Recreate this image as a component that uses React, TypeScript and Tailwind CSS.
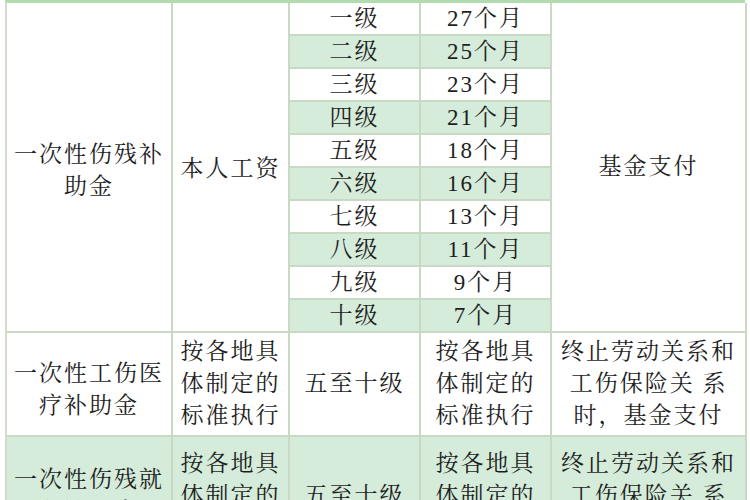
import React from "react";

const grades = [
  ["一级", "27个月"],
  ["二级", "25个月"],
  ["三级", "23个月"],
  ["四级", "21个月"],
  ["五级", "18个月"],
  ["六级", "16个月"],
  ["七级", "13个月"],
  ["八级", "11个月"],
  ["九级", "9个月"],
  ["十级", "7个月"],
];

const font = {
  fontFamily:
    '"Liberation Serif", "Noto Serif CJK SC", "Noto Sans CJK SC", serif',
};

function Cell({
  className,
  children,
}: {
  className: string;
  children: React.ReactNode;
}) {
  return (
    <div
      className={
        "flex items-center justify-center text-center border-r-2 border-b-2 border-[#c9d9c3] " +
        className
      }
    >
      {children}
    </div>
  );
}

function Lines({ lines }: { lines: string[] }) {
  return (
    <div className="flex flex-col items-center leading-[32px]">
      {lines.map((l, i) => (
        <span key={i} className="whitespace-pre">
          {l}
        </span>
      ))}
    </div>
  );
}

export default function App() {
  return (
    <div
      className="w-[750px] h-[500px] overflow-hidden bg-white text-[#1e1e1e] text-[23px] tracking-[2px]"
      style={font}
    >
      <div className="ml-[5px] w-[740px] grid grid-cols-[166px_117px_131px_131px_195px] grid-rows-[repeat(10,33px)_104px_120px] border-l-2 border-t-[3px] border-l-[#d2dccb] border-t-[#b3dbb0]">
        <Cell className="col-start-1 row-start-1 row-span-10 bg-white pt-[8px]">
          <Lines lines={["一次性伤残补", "助金"]} />
        </Cell>
        <Cell className="col-start-2 row-start-1 row-span-10 bg-white pt-[4px]">
          本人工资
        </Cell>
        {grades.map(([g, m], i) => (
          <React.Fragment key={g}>
            <Cell
              className={
                "col-start-3 leading-none " +
                (i % 2 === 1 ? "bg-[#d5ecda]" : "bg-white")
              }
            >
              {g}
            </Cell>
            <Cell
              className={
                "col-start-4 leading-none " +
                (i % 2 === 1 ? "bg-[#d5ecda]" : "bg-white")
              }
            >
              {m}
            </Cell>
          </React.Fragment>
        ))}
        <Cell className="col-start-5 row-start-1 row-span-10 bg-white">
          基金支付
        </Cell>

        <Cell className="col-start-1 row-start-11 bg-white pt-[12px]">
          <Lines lines={["一次性工伤医", "疗补助金"]} />
        </Cell>
        <Cell className="col-start-2 row-start-11 bg-white">
          <Lines lines={["按各地具", "体制定的", "标准执行"]} />
        </Cell>
        <Cell className="col-start-3 row-start-11 bg-white">五至十级</Cell>
        <Cell className="col-start-4 row-start-11 bg-white">
          <Lines lines={["按各地具", "体制定的", "标准执行"]} />
        </Cell>
        <Cell className="col-start-5 row-start-11 bg-white">
          <Lines lines={["终止劳动关系和", "工伤保险关 系", "时，基金支付"]} />
        </Cell>

        <Cell className="col-start-1 row-start-12 bg-[#d5ecda]">
          <Lines lines={["一次性伤残就", "业补助金"]} />
        </Cell>
        <Cell className="col-start-2 row-start-12 bg-[#d5ecda]">
          <Lines lines={["按各地具", "体制定的", "标准执行"]} />
        </Cell>
        <Cell className="col-start-3 row-start-12 bg-[#d5ecda]">五至十级</Cell>
        <Cell className="col-start-4 row-start-12 bg-[#d5ecda]">
          <Lines lines={["按各地具", "体制定的", "标准执行"]} />
        </Cell>
        <Cell className="col-start-5 row-start-12 bg-[#d5ecda]">
          <Lines lines={["终止劳动关系和", "工伤保险关 系", "时，基金支付"]} />
        </Cell>
      </div>
    </div>
  );
}
